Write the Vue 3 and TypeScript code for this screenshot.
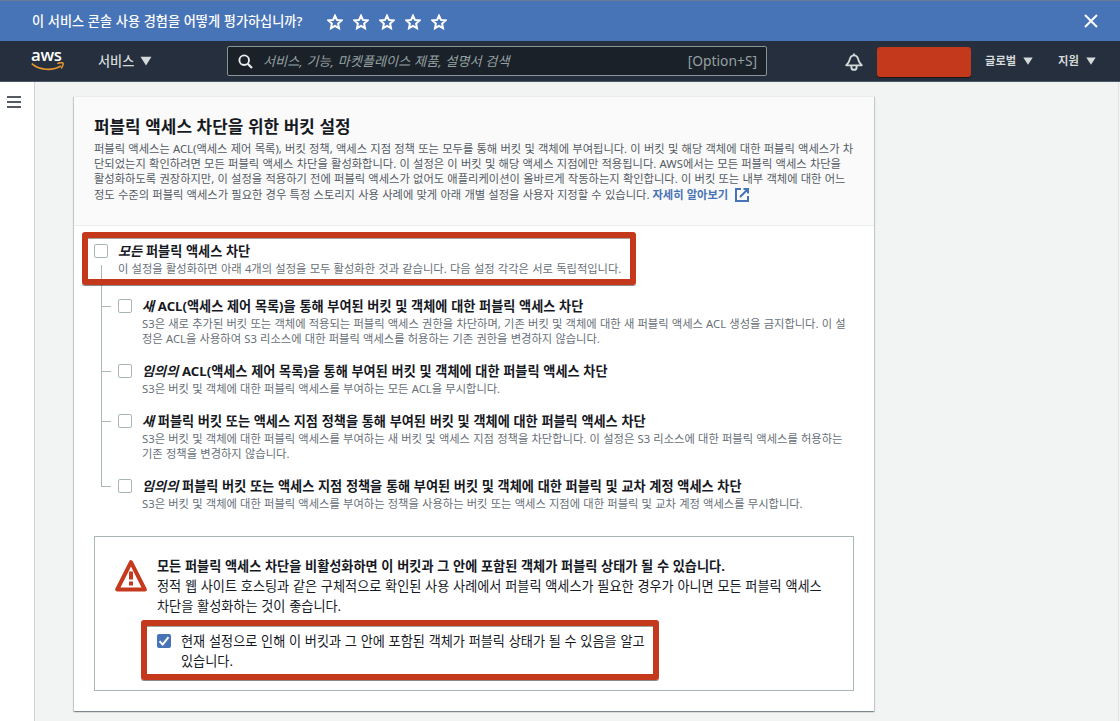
<script setup lang="ts">
interface Setting {
  em: string
  title: string
  lines: string[]
}

const stars = [1, 2, 3, 4, 5]

const intro: string[] = [
  '퍼블릭 액세스는 ACL(액세스 제어 목록), 버킷 정책, 액세스 지점 정책 또는 모두를 통해 버킷 및 객체에 부여됩니다. 이 버킷 및 해당 객체에 대한 퍼블릭 액세스가 차',
  '단되었는지 확인하려면 모든 퍼블릭 액세스 차단을 활성화합니다. 이 설정은 이 버킷 및 해당 액세스 지점에만 적용됩니다. AWS에서는 모든 퍼블릭 액세스 차단을',
  '활성화하도록 권장하지만, 이 설정을 적용하기 전에 퍼블릭 액세스가 없어도 애플리케이션이 올바르게 작동하는지 확인합니다. 이 버킷 또는 내부 객체에 대한 어느',
]

const settings: Setting[] = [
  {
    em: '새',
    title: 'ACL(액세스 제어 목록)을 통해 부여된 버킷 및 객체에 대한 퍼블릭 액세스 차단',
    lines: [
      'S3은 새로 추가된 버킷 또는 객체에 적용되는 퍼블릭 액세스 권한을 차단하며, 기존 버킷 및 객체에 대한 새 퍼블릭 액세스 ACL 생성을 금지합니다. 이 설',
      '정은 ACL을 사용하여 S3 리소스에 대한 퍼블릭 액세스를 허용하는 기존 권한을 변경하지 않습니다.',
    ],
  },
  {
    em: '임의의',
    title: 'ACL(액세스 제어 목록)을 통해 부여된 버킷 및 객체에 대한 퍼블릭 액세스 차단',
    lines: ['S3은 버킷 및 객체에 대한 퍼블릭 액세스를 부여하는 모든 ACL을 무시합니다.'],
  },
  {
    em: '새',
    title: '퍼블릭 버킷 또는 액세스 지점 정책을 통해 부여된 버킷 및 객체에 대한 퍼블릭 액세스 차단',
    lines: [
      'S3은 버킷 및 객체에 대한 퍼블릭 액세스를 부여하는 새 버킷 및 액세스 지점 정책을 차단합니다. 이 설정은 S3 리소스에 대한 퍼블릭 액세스를 허용하는',
      '기존 정책을 변경하지 않습니다.',
    ],
  },
  {
    em: '임의의',
    title: '퍼블릭 버킷 또는 액세스 지점 정책을 통해 부여된 버킷 및 객체에 대한 퍼블릭 및 교차 계정 액세스 차단',
    lines: [
      'S3은 버킷 및 객체에 대한 퍼블릭 액세스를 부여하는 정책을 사용하는 버킷 또는 액세스 지점에 대한 퍼블릭 및 교차 계정 액세스를 무시합니다.',
    ],
  },
]
</script>

<template>
  <div class="page">
    <div class="banner">
      <span class="question">이 서비스 콘솔 사용 경험을 어떻게 평가하십니까?</span>
      <div class="stars">
        <svg v-for="s in stars" :key="s" width="16" height="16" viewBox="0 0 16 16">
          <path d="M8 1.6l1.9 4.3 4.6.5-3.4 3.1.9 4.7L8 11.9l-4 2.3.9-4.7L1.5 6.400l4.600-.5z" fill="none" stroke="#fff" stroke-width="2" stroke-linejoin="miter" />
        </svg>
      </div>
      <svg class="close" width="14" height="14" viewBox="0 0 14 14">
        <path d="M1 1l12 12M13 1L1 13" stroke="#fff" stroke-width="2" />
      </svg>
    </div>

    <nav class="nav">
      <div class="logo">
        <span class="logo-text">aws</span>
        <svg class="smile" width="34" height="10" viewBox="0 0 34 10">
          <path d="M.8 1.700C8 8.400 21.500 9 29.800 4" fill="none" stroke="#e8962e" stroke-width="1.700" />
          <path d="M26.300 1.600c2.200-.9 5.200-1 5.700-.5.5.7-.3 3.500-1.800 5.300" fill="none" stroke="#e8962e" stroke-width="1.500" />
        </svg>
      </div>
      <div class="services">서비스 <svg width="12" height="10" viewBox="0 0 12 10"><path d="M.5.800h11L6 9.500z" fill="#d5dbdb" /></svg></div>
      <div class="search">
        <svg width="15" height="15" viewBox="0 0 15 15">
          <circle cx="6.200" cy="6.200" r="4.800" fill="none" stroke="#eaeded" stroke-width="1.900" />
          <path d="M9.700 9.700l4.300 4.300" stroke="#eaeded" stroke-width="2.200" />
        </svg>
        <span class="placeholder">서비스, 기능, 마켓플레이스 제품, 설명서 검색</span>
        <span class="shortcut">[Option+S]</span>
      </div>
      <svg class="bell" width="18" height="18" viewBox="0 0 18 18">
        <path d="M1.200 12.300C4.300 9.800 4.200 8.500 5.100 5.200 5.800 3.100 7.100 2.300 9 2.300s3.200.8 3.900 2.900c.9 3.300.8 4.600 3.900 7.100z" fill="none" stroke="#d5dbdb" stroke-width="1.800" stroke-linejoin="round" />
        <path d="M9 .4v2" stroke="#d5dbdb" stroke-width="1.800" />
        <path d="M6.400 12.800v1.600a2.600 2.400 0 0 0 5.200 0v-1.600" fill="none" stroke="#d5dbdb" stroke-width="1.900" />
      </svg>
      <div class="account"></div>
      <div class="menu global">글로벌 <svg width="10" height="8" viewBox="0 0 10 8"><path d="M.3.500h9.400L5 7.800z" fill="#d5dbdb" /></svg></div>
      <div class="menu support">지원 <svg width="10" height="8" viewBox="0 0 10 8"><path d="M.3.500h9.400L5 7.800z" fill="#d5dbdb" /></svg></div>
    </nav>

    <div class="content">
      <aside class="side">
        <svg width="14" height="12" viewBox="0 0 14 12"><path d="M0 1h14M0 6h14M0 11h14" stroke="#545b64" stroke-width="2" /></svg>
      </aside>
      <main class="main">
        <section class="card">
          <header class="card-head">
            <h2>퍼블릭 액세스 차단을 위한 버킷 설정</h2>
            <p v-for="line in intro" :key="line" class="small">{{ line }}</p>
            <p class="small last">
              <span>정도 수준의 퍼블릭 액세스가 필요한 경우 특정 스토리지 사용 사례에 맞게 아래 개별 설정을 사용자 지정할 수 있습니다.</span>
              <a class="more">자세히 알아보기</a>
              <svg width="14" height="14" viewBox="0 0 14 14">
                <path d="M6 1H1v12h12V8M8.500 1H13v4.500M13 1L5 9" fill="none" stroke="#4774b7" stroke-width="2" />
              </svg>
            </p>
          </header>

          <div class="card-body">
            <div class="option all">
              <span class="box"></span>
              <div>
                <p class="title"><em>모든</em> 퍼블릭 액세스 차단</p>
                <p class="hint">이 설정을 활성화하면 아래 4개의 설정을 모두 활성화한 것과 같습니다. 다음 설정 각각은 서로 독립적입니다.</p>
              </div>
              <span class="mark mark-all"></span>
            </div>

            <div class="children">
              <div v-for="(s, i) in settings" :key="i" class="option child">
                <span class="box"></span>
                <div>
                  <p class="title"><em>{{ s.em }}</em> {{ s.title }}</p>
                  <p v-for="line in s.lines" :key="line" class="hint">{{ line }}</p>
                </div>
              </div>
            </div>

            <div class="alert">
              <svg class="warn" width="32" height="33" viewBox="0 0 32 33">
                <path d="M16 3.200L29.800 30.500H2.200z" fill="none" stroke="#c5391d" stroke-width="4" stroke-linejoin="round" />
                <path d="M16 12.500v8M16 22.500v4" stroke="#c5391d" stroke-width="4" />
              </svg>
              <div class="alert-text">
                <p class="strong">모든 퍼블릭 액세스 차단을 비활성화하면 이 버킷과 그 안에 포함된 객체가 퍼블릭 상태가 될 수 있습니다.</p>
                <p>정적 웹 사이트 호스팅과 같은 구체적으로 확인된 사용 사례에서 퍼블릭 액세스가 필요한 경우가 아니면 모든 퍼블릭 액세스</p>
                <p>차단을 활성화하는 것이 좋습니다.</p>
                <div class="ack">
                  <span class="box checked">
                    <svg width="14" height="14" viewBox="0 0 14 14"><path d="M2.500 7.300l3.200 3.200 5.800-7.300" fill="none" stroke="#fff" stroke-width="2" /></svg>
                  </span>
                  <div>
                    <p>현재 설정으로 인해 이 버킷과 그 안에 포함된 객체가 퍼블릭 상태가 될 수 있음을 알고</p>
                    <p>있습니다.</p>
                  </div>
                  <span class="mark mark-ack"></span>
                </div>
              </div>
            </div>
          </div>
        </section>
      </main>
    </div>
  </div>
</template>

<style>
body {
  margin: 0;
  overflow: hidden;
}
</style>

<style scoped>
.page {
  width: 1120px;
  height: 721px;
  display: flex;
  flex-direction: column;
  overflow: hidden;
  background: #f2f3f3;
  color: #16191f;
  font-family: "Noto Sans", "Noto Sans CJK KR", sans-serif;
  font-size: 13.160px;
  line-height: 20px;
  word-spacing: 0.300px;
  white-space: nowrap;
}
.page * {
  box-sizing: border-box;
}
p,
h2 {
  margin: 0;
}
svg {
  display: block;
  flex: none;
}
.banner {
  height: 41px;
  flex: none;
  display: flex;
  align-items: center;
  padding: 0 22px 0 32px;
  background: #4774b7;
  border-top: 1px solid #6b7a94;
  color: #fff;
  font-weight: 500;
}
.question {
  width: 295px;
}
.stars {
  display: flex;
  gap: 10px;
  padding-top: 1px;
}
.close {
  margin-left: auto;
}
.nav {
  height: 41px;
  flex: none;
  display: flex;
  align-items: center;
  background: #252f3d;
  border-bottom: 1px solid #4d5663;
  color: #d5dbdb;
}
.logo {
  width: 34px;
  height: 22px;
  margin-left: 31px;
  display: flex;
  flex-direction: column;
}
.logo-text {
  height: 13px;
  color: #fff;
  font-family: "Open Sans", sans-serif;
  font-size: 16.800px;
  font-weight: 600;
  letter-spacing: -0.300px;
  line-height: 10px;
}
.services {
  display: flex;
  align-items: center;
  gap: 6px;
  width: 129px;
  margin-left: 33px;
  font-weight: 500;
}
.search {
  width: 540px;
  height: 30px;
  display: flex;
  align-items: center;
  padding: 0 9px 0 10px;
  border: 1px solid #879596;
  border-radius: 2px;
  background: #1a2129;
  color: #95a0a1;
}
.placeholder {
  margin-left: 10px;
  font-style: italic;
}
.shortcut {
  margin-left: auto;
  font-size: 13.800px;
}
.bell {
  margin: 2px 0 0 78px;
}
.account {
  width: 94px;
  height: 30px;
  margin: 1px 0 0 14px;
  border-radius: 3px;
  background: #c4381b;
  box-shadow: 0 1px 0 #1b1716;
}
.menu {
  display: flex;
  align-items: center;
  gap: 7px;
  font-size: 11.300px;
  font-weight: 700;
}
.global {
  width: 73px;
  margin-left: 14px;
}
.content {
  flex: 1;
  display: flex;
  min-height: 0;
}
.side {
  width: 35px;
  flex: none;
  padding: 14px 0 0 7px;
  background: #fff;
  border-right: 1px solid #cdd1d1;
}
.main {
  width: 1084px;
  flex: none;
  padding: 14px 0 0 39px;
  border-right: 1px solid #e0e3e3;
}
.card {
  width: 800px;
  height: 615px;
  background: #fff;
  border-top: 1px solid #eaeded;
  box-shadow: 0 1px 1px 0 rgba(0, 28, 36, 0.300), 1px 1px 1px 0 rgba(0, 28, 36, 0.150), -1px 1px 1px 0 rgba(0, 28, 36, 0.150);
}
.card-head {
  height: 129px;
  padding: 19px 20px 0;
  background: #fafafa;
  border-bottom: 1px solid #eaeded;
}
h2 {
  height: 25px;
  font-size: 16.900px;
  font-weight: 700;
  line-height: 22px;
}
.small {
  height: 15px;
  color: #545b64;
  font-size: 11.280px;
  line-height: 15px;
}
.last {
  display: flex;
  height: 17px;
  padding-top: 1px;
  line-height: 16px;
}
.last svg {
  margin-top: 1px;
}
.more {
  margin: 0 7px 0 3px;
  color: #4774b7;
  font-weight: 700;
}
.card-body {
  padding: 15px 20px 0;
}
.option {
  display: flex;
  position: relative;
}
.box {
  width: 14px;
  height: 14px;
  flex: none;
  margin: 3px 10px 0 0;
  border: 1px solid #aab7b8;
  border-radius: 2px;
  background: #fff;
}
.title {
  height: 20px;
  font-weight: 700;
}
.hint {
  height: 15px;
  color: #687078;
  font-size: 11.280px;
  line-height: 15px;
}
.all {
  height: 55px;
}
.all::before {
  content: "";
  position: absolute;
  left: 7px;
  top: 24px;
  height: 31px;
  border-left: 1px solid #aab7b8;
}
.mark {
  position: absolute;
  border: 6px solid #c4381b;
  border-radius: 3px;
  box-shadow: 0 1px 0 rgba(30, 20, 20, 0.500), inset 0 1px 0 rgba(30, 20, 20, 0.400);
}
.mark-all {
  left: -12px;
  top: -9px;
  width: 554px;
  height: 53px;
}
.child {
  padding: 0 0 15px 24px;
}
.child::before {
  content: "";
  position: absolute;
  left: 7px;
  top: 0;
  bottom: 0;
  border-left: 1px solid #aab7b8;
}
.child:last-child::before {
  bottom: auto;
  height: 10px;
}
.child::after {
  content: "";
  position: absolute;
  left: 7px;
  top: 10px;
  width: 10px;
  border-top: 1px solid #aab7b8;
}
.alert {
  display: flex;
  height: 155px;
  margin-top: 10px;
  padding: 19px 20px 0;
  border: 1px solid #aab7b8;
}
.warn {
  margin: 3px 10px 0 0;
}
.strong {
  font-weight: 700;
}
.ack {
  position: relative;
  display: flex;
  margin-top: 15px;
}
.checked {
  border: 0;
  background: #4774b7;
}
.mark-ack {
  left: -16px;
  top: -11px;
  width: 518px;
  height: 60px;
}
</style>
